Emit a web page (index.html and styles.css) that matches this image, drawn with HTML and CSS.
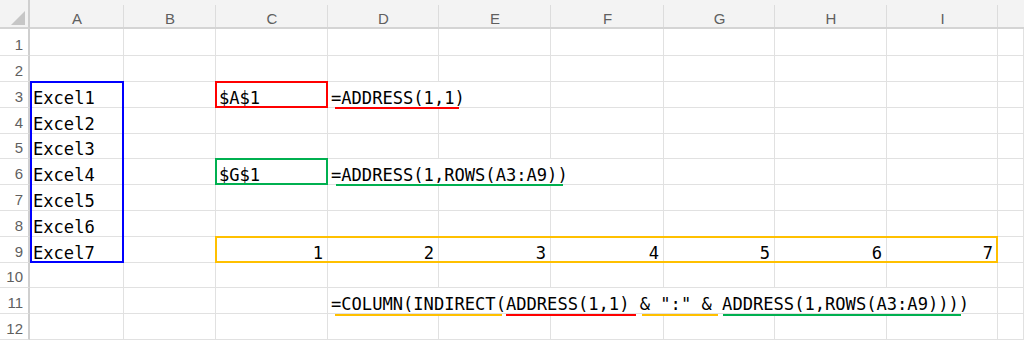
FILE: index.html
```html
<!DOCTYPE html>
<html lang="en">
<head>
<meta charset="utf-8">
<title>ADDRESS / INDIRECT / COLUMN</title>
<link rel="stylesheet" href="styles.css">
</head>
<body>
<div class="sheet">
  <div class="corner"><svg width="14" height="14" viewBox="0 0 14 14"><path d="M14 0V14H0Z" fill="#c6c6c6"/></svg></div>
  <div class="colh">A</div><div class="colh">B</div><div class="colh">C</div><div class="colh">D</div><div class="colh">E</div><div class="colh">F</div><div class="colh">G</div><div class="colh">H</div><div class="colh">I</div><div class="colh last"></div>

  <div class="rowh">1</div><div class="c"></div><div class="c"></div><div class="c"></div><div class="c"></div><div class="c"></div><div class="c"></div><div class="c"></div><div class="c"></div><div class="c"></div><div class="c"></div>

  <div class="rowh">2</div><div class="c"></div><div class="c"></div><div class="c"></div><div class="c"></div><div class="c"></div><div class="c"></div><div class="c"></div><div class="c"></div><div class="c"></div><div class="c"></div>

  <div class="rowh">3</div><div class="c">Excel1</div><div class="c"></div><div class="c">$A$1</div><div class="c span2"><span class="ul red u-r3">=ADDRESS(1,1)</span></div><div class="c"></div><div class="c"></div><div class="c"></div><div class="c"></div><div class="c"></div>

  <div class="rowh">4</div><div class="c">Excel2</div><div class="c"></div><div class="c"></div><div class="c"></div><div class="c"></div><div class="c"></div><div class="c"></div><div class="c"></div><div class="c"></div><div class="c"></div>

  <div class="rowh">5</div><div class="c">Excel3</div><div class="c"></div><div class="c"></div><div class="c"></div><div class="c"></div><div class="c"></div><div class="c"></div><div class="c"></div><div class="c"></div><div class="c"></div>

  <div class="rowh">6</div><div class="c">Excel4</div><div class="c"></div><div class="c">$G$1</div><div class="c span3"><span class="ul green u-r6">=ADDRESS(1,ROWS(A3:A9))</span></div><div class="c"></div><div class="c"></div><div class="c"></div><div class="c"></div>

  <div class="rowh">7</div><div class="c">Excel5</div><div class="c"></div><div class="c"></div><div class="c"></div><div class="c"></div><div class="c"></div><div class="c"></div><div class="c"></div><div class="c"></div><div class="c"></div>

  <div class="rowh">8</div><div class="c">Excel6</div><div class="c"></div><div class="c"></div><div class="c"></div><div class="c"></div><div class="c"></div><div class="c"></div><div class="c"></div><div class="c"></div><div class="c"></div>

  <div class="rowh">9</div><div class="c">Excel7</div><div class="c"></div><div class="c num">1</div><div class="c num">2</div><div class="c num">3</div><div class="c num">4</div><div class="c num">5</div><div class="c num">6</div><div class="c num">7</div><div class="c"></div>

  <div class="rowh">10</div><div class="c"></div><div class="c"></div><div class="c"></div><div class="c"></div><div class="c"></div><div class="c"></div><div class="c"></div><div class="c"></div><div class="c"></div><div class="c"></div>

  <div class="rowh">11</div><div class="c"></div><div class="c"></div><div class="c"></div><div class="c span6"><span class="formula"><span class="ul gold u-a">=COLUMN(INDIRECT(</span><span class="ul red u-b">ADDRESS(1,1) </span><span class="ul gold u-c">&amp; ":" &amp; </span><span class="ul green u-d">ADDRESS(1,ROWS(A3:A9))))</span></span></div><div class="c"></div>

  <div class="rowh">12</div><div class="c"></div><div class="c"></div><div class="c"></div><div class="c"></div><div class="c"></div><div class="c"></div><div class="c"></div><div class="c"></div><div class="c"></div><div class="c"></div>

  <div class="marks">
    <div class="mark m-blue"></div>
    <div class="mark m-red"></div>
    <div class="mark m-green"></div>
    <div class="mark m-gold"></div>
  </div>
</div>
</body>
</html>
```

FILE: styles.css
```css
html, body {
  margin: 0;
  padding: 0;
  background: #ffffff;
}

.sheet {
  --cols: 30px 94px 92px 112px 111px 112px 113px 111px 112px 111px 26px;
  --rows: 29px 27px 26px 26px 26px 25px 26px 26px 26px 26px 25px 26px 26px;
  position: relative;
  width: 1024px;
  height: 340px;
  overflow: hidden;
  display: grid;
  grid-template-columns: var(--cols);
  grid-template-rows: var(--rows);
  font-family: "DejaVu Sans Mono", "Liberation Mono", monospace;
  font-size: 17.1px;
  color: #000000;
}

.corner {
  box-sizing: border-box;
  background: #f3f3f3;
  border-right: 2px solid #cfcfcf;
  border-bottom: 2px solid #d4d4d4;
  display: flex;
  justify-content: flex-end;
  align-items: flex-end;
  padding: 0 3px 2px 0;
}
.corner svg { display: block; }

.colh {
  box-sizing: border-box;
  background: #f3f3f3 linear-gradient(#dcdcdc, #dcdcdc) no-repeat right bottom / 1px 22px;
  border-bottom: 2px solid #d4d4d4;
  display: flex;
  justify-content: center;
  align-items: flex-end;
  font-family: "Liberation Sans", Arial, sans-serif;
  font-size: 15px;
  line-height: 17px;
  color: #5f5f5f;
}
.colh.last { background: #f3f3f3; }

.rowh {
  box-sizing: border-box;
  background: #ffffff;
  border-right: 2px solid #cfcfcf;
  border-bottom: 1px solid #e1e1e1;
  display: flex;
  justify-content: flex-end;
  align-items: flex-end;
  padding: 0 5px 2px 0;
  font-family: "Liberation Sans", Arial, sans-serif;
  font-size: 15px;
  line-height: 17px;
  color: #5f5f5f;
}

.c {
  box-sizing: border-box;
  border-right: 1px solid #e1e1e1;
  border-bottom: 1px solid #e1e1e1;
  display: flex;
  align-items: flex-end;
  padding: 0 3px;
  line-height: 18px;
  white-space: nowrap;
  min-width: 0;
}
.c.num {
  justify-content: flex-end;
  padding-right: 4px;
}
.c.span2 { grid-column: span 2; }
.c.span3 { grid-column: span 3; }
.c.span6 { grid-column: span 6; }

.formula { white-space: pre; }

/* coloured underlines under formula parts */
.ul { position: relative; }
.ul::after {
  content: "";
  position: absolute;
  bottom: -2px;
  height: 2px;
  left: 4px;
  right: 4px;
}
.ul.red::after { background: #ff0000; }
.ul.green::after { background: #00b050; }
.ul.gold::after { background: #ffc000; }

.u-r3::after { left: 4px; right: 6px; }
.u-r6::after { left: 5px; right: 5px; }
.u-a::after { left: 4px; right: 4px; }
.u-b::after { left: 0; right: 4px; }
.u-c::after { left: 2px; right: 4px; }
.u-d::after { left: 1px; right: 8px; }

/* range outlines drawn over the grid */
.marks {
  position: absolute;
  inset: 0;
  display: grid;
  grid-template-columns: var(--cols);
  grid-template-rows: var(--rows);
  pointer-events: none;
}
.mark {
  border: 2px solid transparent;
}
.m-blue {
  grid-column: 2;
  grid-row: 4 / 11;
  border-color: #0000ff;
  margin-top: -1px;
}
.m-red {
  grid-column: 4;
  grid-row: 4;
  border-color: #ff0000;
  margin: -1px 0 0 -1px;
}
.m-green {
  grid-column: 4;
  grid-row: 7;
  border-color: #00b050;
  margin: -1px 0 0 -1px;
}
.m-gold {
  grid-column: 4 / 11;
  grid-row: 10;
  border-color: #ffc000;
  margin: -1px 0 0 -1px;
}
```
